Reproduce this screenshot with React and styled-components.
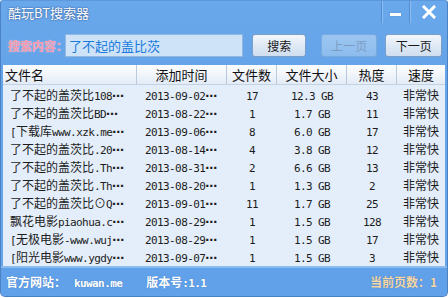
import React from "react";
import styled, { createGlobalStyle } from "styled-components";

const GlobalStyle = createGlobalStyle`
  html, body { margin: 0; padding: 0; background: #ffffff; }
  * { box-sizing: border-box; }
`;

const CJK = `"Noto Sans CJK SC", "Noto Sans", sans-serif`;

const Window = styled.div`
  width: 448px;
  height: 297px;
  display: flex;
  flex-direction: column;
  background: linear-gradient(#6aa8ec, #66a4e9 60px);
  border: 1px solid #4a82c4;
  border-top-color: #5d98dc;
  border-radius: 3px 3px 5px 5px;
  font-family: ${CJK};
  overflow: hidden;
`;

const TitleBar = styled.div`
  height: 27px;
  display: flex;
  align-items: flex-start;
  justify-content: space-between;
`;

const Title = styled.div`
  padding: 4px 0 0 7px;
  font-size: 13px;
  line-height: 16px;
  color: #ffffff;
  text-shadow: 0 0 2px rgba(20, 50, 100, 0.9);
`;

const Controls = styled.div`
  display: flex;
  height: 22px;
`;

const CtrlButton = styled.div`
  width: ${(p) => p.$w}px;
  height: 22px;
  display: flex;
  align-items: center;
  justify-content: center;
  border-left: 1px solid rgba(40, 90, 160, 0.35);
  box-shadow: inset 1px 0 0 rgba(255, 255, 255, 0.25);
`;

const MinBar = styled.div`
  width: 11px;
  height: 3px;
  margin-top: 4px;
  background: #ffffff;
  box-shadow: 0 0 1px rgba(30, 60, 110, 0.7);
`;

const SearchRow = styled.div`
  height: 37px;
  display: flex;
  align-items: center;
  padding: 0 5px 2px 7px;
`;

const Label = styled.div`
  width: 57px;
  font-size: 12px;
  font-weight: 700;
  color: #f398ad;
  text-shadow: 0 0 1px rgba(255, 235, 242, 0.9);
  white-space: nowrap;
`;

const Input = styled.div`
  width: 180px;
  height: 23px;
  display: flex;
  align-items: center;
  padding-left: 3px;
  background: #cfe3f8;
  border: 1px solid #93b8e0;
  color: #1b7bdc;
  font-size: 13px;
`;

const Button = styled.div`
  width: ${(p) => p.$w || 54}px;
  height: 23px;
  margin-left: ${(p) => p.$ml}px;
  display: flex;
  align-items: center;
  justify-content: center;
  border-radius: 3px;
  font-size: 12px;
  color: ${(p) => (p.$disabled ? "#7d9cc0" : "#1a1a1a")};
  background: ${(p) =>
    p.$disabled
      ? "linear-gradient(#9cc6f1, #8cbcee)"
      : "linear-gradient(#f3f7fc, #dfe9f5 50%, #cfdeef)"};
  border: 1px solid ${(p) => (p.$disabled ? "#7aa9dd" : "#7c9fc9")};
`;

const Table = styled.div`
  margin: 0 2px;
  display: flex;
  flex-direction: column;
  background: #e4eefa;
`;

const Grid = styled.div`
  display: grid;
  grid-template-columns: 134px 90px 50px 70px 50px 1fr;
  height: ${(p) => p.$h}px;
  align-items: center;
`;

const Header = styled(Grid)`
  background: linear-gradient(#fcfdfe, #f1f5fb 50%, #e3ebf6);
  border-bottom: 1px solid #c3d3e6;
`;

const HeadCell = styled.div`
  height: 100%;
  display: flex;
  align-items: center;
  justify-content: ${(p) => (p.$left ? "flex-start" : "center")};
  padding-left: ${(p) => (p.$left ? 2 : 0)}px;
  font-size: 13px;
  color: #111;
  border-right: ${(p) => (p.$last ? "none" : "1px solid #b9cade")};
`;

const Body = styled.div`
  height: 181px;
`;

const Cell = styled.div`
  font-size: 12px;
  color: #1c1c1c;
  white-space: nowrap;
  overflow: hidden;
  text-align: ${(p) => p.$align || "center"};
  padding-left: ${(p) => p.$pl || 0}px;
`;

const Latin = styled.span`
  font-family: "DejaVu Sans Mono", monospace;
  font-size: 11px;
  letter-spacing: -0.6px;
  font-weight: ${(p) => (p.$bold ? 700 : 400)};
`;

const Dots = styled.span`
  font-family: "DejaVu Sans", sans-serif;
  font-size: 12px;
  font-weight: 700;
  letter-spacing: -0.5px;
`;

const Footer = styled.div`
  flex: 1;
  display: flex;
  align-items: center;
  padding: 0 10px 2px 5px;
  background: #60a1ea;
  border-top: 2px solid #8bbcf0;
  color: #ffffff;
  font-weight: 700;
  font-size: 12px;
`;

const FootItem = styled.div`
  white-space: nowrap;
  margin-right: ${(p) => p.$mr || 0}px;
  color: ${(p) => p.$color || "#ffffff"};
  text-shadow: 0 0 1px rgba(30, 70, 130, 0.5);
`;

const Spacer = styled.div`
  flex: 1;
`;

function Mixed({ text, bold }) {
  const parts = [];
  const re = /([\x20-\x7E]+)|(⋯)|([^\x20-\x7E⋯]+)/g;
  let m;
  let i = 0;
  while ((m = re.exec(text))) {
    if (m[1]) parts.push(<Latin key={i++} $bold={bold}>{m[1]}</Latin>);
    else if (m[2]) parts.push(<Dots key={i++}>⋯</Dots>);
    else parts.push(<span key={i++}>{m[3]}</span>);
  }
  return <>{parts}</>;
}

const rows = [
  ["了不起的盖茨比108⋯", "2013-09-02⋯", "17", "12.3 GB", "43"],
  ["了不起的盖茨比BD⋯", "2013-08-22⋯", "1", "1.7 GB", "11"],
  ["[下载库www.xzk.me⋯", "2013-09-06⋯", "8", "6.0 GB", "17"],
  ["了不起的盖茨比.20⋯", "2013-08-14⋯", "4", "3.8 GB", "12"],
  ["了不起的盖茨比.Th⋯", "2013-08-31⋯", "2", "6.6 GB", "13"],
  ["了不起的盖茨比.Th⋯", "2013-08-20⋯", "1", "1.3 GB", "2"],
  ["了不起的盖茨比⊙Q⋯", "2013-09-01⋯", "11", "1.7 GB", "25"],
  ["飘花电影piaohua.c⋯", "2013-08-29⋯", "1", "1.5 GB", "128"],
  ["[无极电影-www.wuj⋯", "2013-08-29⋯", "1", "1.5 GB", "17"],
  ["[阳光电影www.ygdy⋯", "2013-09-07⋯", "1", "1.5 GB", "3"],
];

export default function App() {
  return (
    <>
      <GlobalStyle />
      <Window>
        <TitleBar>
          <Title>酷玩BT搜索器</Title>
          <Controls>
            <CtrlButton $w={28}>
              <MinBar />
            </CtrlButton>
            <CtrlButton $w={38}>
              <svg width="14" height="14" viewBox="0 0 14 14">
                <path d="M2 2 L12 12 M12 2 L2 12" stroke="#fff" strokeWidth="3" strokeLinecap="square" />
              </svg>
            </CtrlButton>
          </Controls>
        </TitleBar>
        <SearchRow>
          <Label>搜索内容：</Label>
          <Input>了不起的盖比茨</Input>
          <Button $ml={9}>搜索</Button>
          <Button $ml={15} $w={57} $disabled>上一页</Button>
          <Button $ml={8} $w={57}>下一页</Button>
        </SearchRow>
        <Table>
          <Header $h={20}>
            <HeadCell $left>文件名</HeadCell>
            <HeadCell>添加时间</HeadCell>
            <HeadCell>文件数</HeadCell>
            <HeadCell>文件大小</HeadCell>
            <HeadCell>热度</HeadCell>
            <HeadCell $last>速度</HeadCell>
          </Header>
          <Body>
            {rows.map((r, idx) => (
              <Grid key={idx} $h={18}>
                <Cell $align="left" $pl={7}>
                  <Mixed text={r[0]} />
                </Cell>
                <Cell $align="left" $pl={8}>
                  <Mixed text={r[1]} />
                </Cell>
                <Cell>
                  <Mixed text={r[2]} />
                </Cell>
                <Cell>
                  <Mixed text={r[3]} />
                </Cell>
                <Cell>
                  <Mixed text={r[4]} />
                </Cell>
                <Cell>非常快</Cell>
              </Grid>
            ))}
          </Body>
        </Table>
        <Footer>
          <FootItem $mr={8}>官方网站：</FootItem>
          <FootItem $mr={24}>
            <Mixed text="kuwan.me" bold />
          </FootItem>
          <FootItem>
            版本号<Mixed text=":1.1" bold />
          </FootItem>
          <Spacer />
          <FootItem $color="#f6d7a6">当前页数：1</FootItem>
        </Footer>
      </Window>
    </>
  );
}
